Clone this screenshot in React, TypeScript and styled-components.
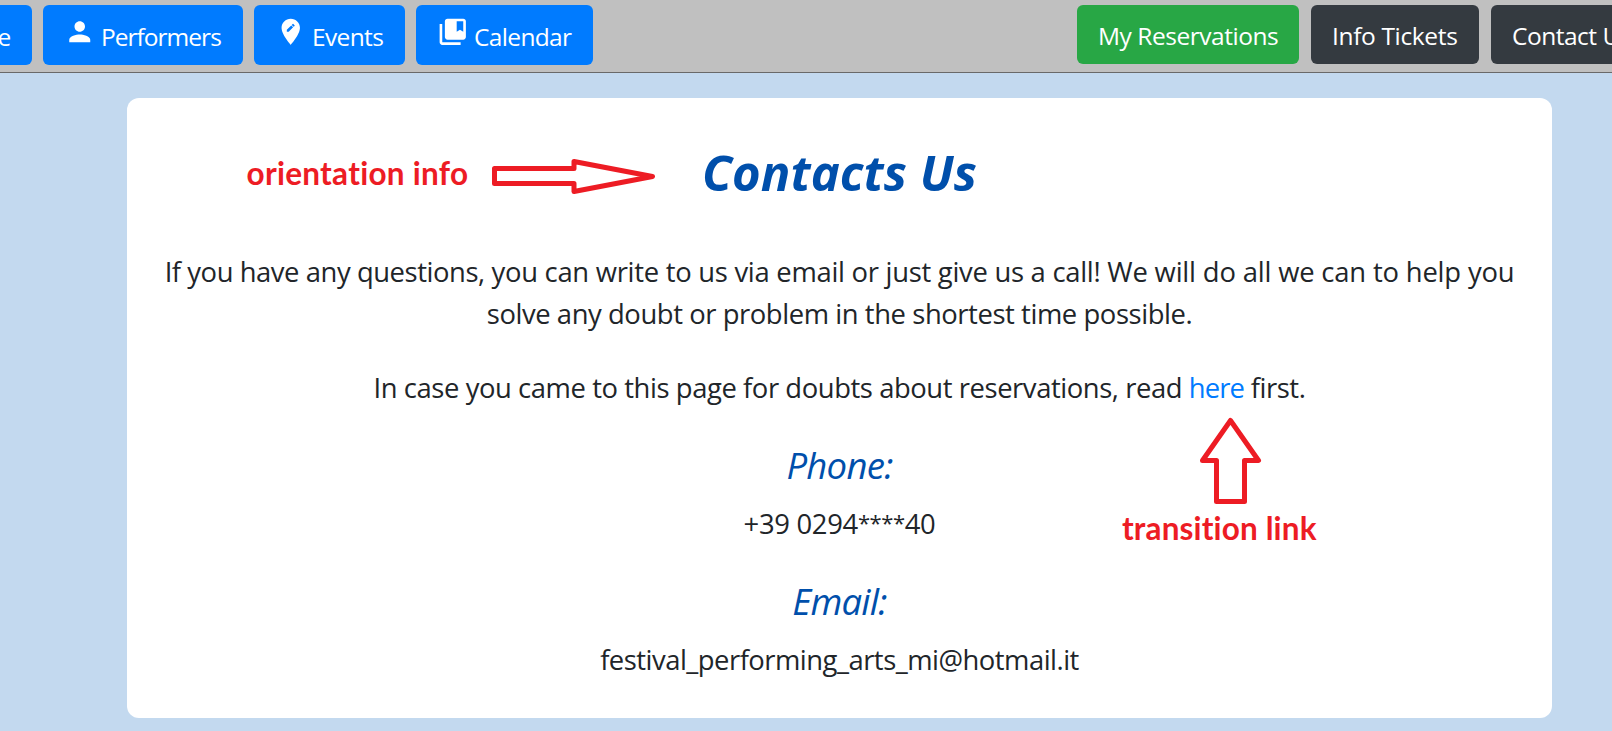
import React from 'react';
import styled, { createGlobalStyle } from 'styled-components';
import { MdHome, MdPerson, MdEditLocation, MdCollectionsBookmark } from 'react-icons/md';

const GlobalStyle = createGlobalStyle`
  *, *::before, *::after { box-sizing: border-box; }
  body {
    margin: 0;
    background: #c3d9ef;
    color: #212529;
    font-family: 'Open Sans', 'Noto Sans', sans-serif;
    overflow: hidden;
  }
`;

const Page = styled.div`
  position: relative;
  height: 731px;
  overflow: hidden;
`;

const Navbar = styled.nav`
  display: flex;
  align-items: flex-start;
  height: 73px;
  padding-top: 5px;
  background: #c0c0c0;
  border-bottom: 1px solid #696969;
`;

const MainLinks = styled.div`
  display: flex;
  flex: none;
  gap: 11px;
  margin-left: -113px;
`;

const SideLinks = styled.div`
  display: flex;
  flex: none;
  gap: 12px;
  margin-left: 484px;
`;

const NavButton = styled.a<{ $width: number; $color: string; $tall?: boolean }>`
  display: flex;
  flex: none;
  align-items: flex-start;
  width: ${(p) => p.$width}px;
  height: ${(p) => (p.$tall ? 60 : 59)}px;
  padding: ${(p) => (p.$tall ? '10.5px 21px' : '11.5px 21px')};
  border-radius: 6px;
  background: ${(p) => p.$color};
  color: #fff;
  white-space: nowrap;

  svg {
    flex: none;
    width: 31.5px;
    height: 31.5px;
  }
`;

const Label = styled.span<{ $spacing: number; $withIcon?: boolean }>`
  margin: ${(p) => (p.$withIcon ? '2px 0 0 5.5px' : '0')};
  font-size: 24.5px;
  line-height: 37.5px;
  letter-spacing: ${(p) => p.$spacing}px;
`;

const Card = styled.main`
  width: 1425px;
  height: 620px;
  margin: 25px 0 0 127px;
  padding: 44px 36px 0;
  border-radius: 12px;
  background: #fff;
  text-align: center;
`;

const Title = styled.h1`
  margin: 0 0 49px;
  color: #004fab;
  font-size: 49px;
  font-style: italic;
  font-weight: 700;
  line-height: 60px;
  letter-spacing: 0.07px;
`;

const Text = styled.p<{ $after: number }>`
  margin: 0 0 ${(p) => p.$after}px;
  font-size: 27.4px;
  line-height: 42px;
`;

const Line = styled.span<{ $spacing: number }>`
  display: block;
  white-space: nowrap;
  letter-spacing: ${(p) => p.$spacing}px;
`;

const Phrase = styled.span<{ $spacing: number }>`
  letter-spacing: ${(p) => p.$spacing}px;
`;

const Masked = styled.span`
  position: relative;
  top: -3px;
  font-size: 22px;
  line-height: 0;
  letter-spacing: -0.4px;
`;

const Link = styled.a`
  color: #007bff;
  letter-spacing: -0.9px;
`;

const Subtitle = styled.h2`
  margin: 0 0 16px;
  color: #004fab;
  font-size: 36.5px;
  font-style: italic;
  font-weight: 400;
  line-height: 44px;
  letter-spacing: -0.75px;
`;

const Note = styled.span<{ $x: number; $y: number; $spacing: number }>`
  position: absolute;
  left: ${(p) => p.$x}px;
  top: ${(p) => p.$y}px;
  color: #ed1c24;
  font-family: Lato, sans-serif;
  font-size: 31.5px;
  font-weight: 700;
  font-variant-ligatures: none;
  line-height: 38px;
  letter-spacing: ${(p) => p.$spacing}px;
  white-space: nowrap;
`;

const Arrows = styled.svg`
  position: absolute;
  inset: 0;
  fill: none;
  stroke: #ed1c24;
  stroke-width: 5;
  stroke-linejoin: round;
  pointer-events: none;
`;

const mainLinks = [
  { label: 'Home', Icon: MdHome, width: 145, spacing: -1 },
  { label: 'Performers', Icon: MdPerson, width: 200, spacing: -0.98 },
  { label: 'Events', Icon: MdEditLocation, width: 151, spacing: -0.64 },
  { label: 'Calendar', Icon: MdCollectionsBookmark, width: 177, spacing: -0.65 },
];

const sideLinks = [
  { label: 'My Reservations', color: '#28a745', width: 222, spacing: -0.47 },
  { label: 'Info Tickets', color: '#343a40', width: 168, spacing: -0.35 },
  { label: 'Contact Us', color: '#343a40', width: 170, spacing: -0.5 },
];

export default function App() {
  return (
    <Page>
      <GlobalStyle />
      <Navbar>
        <MainLinks>
          {mainLinks.map(({ label, Icon, width, spacing }) => (
            <NavButton key={label} $width={width} $color="#007bff" $tall>
              <Icon />
              <Label $spacing={spacing} $withIcon>{label}</Label>
            </NavButton>
          ))}
        </MainLinks>
        <SideLinks>
          {sideLinks.map(({ label, color, width, spacing }) => (
            <NavButton key={label} $width={width} $color={color}>
              <Label $spacing={spacing}>{label}</Label>
            </NavButton>
          ))}
        </SideLinks>
      </Navbar>
      <Card>
        <Title>Contacts Us</Title>
        <Text $after={32}>
          <Line $spacing={-0.27}>
            <Phrase $spacing={-0.43}>If you have any questions,</Phrase>
            {' you can write to us via email or just give us a call! '}
            <Phrase $spacing={-0.17}>We will do all we can to help you</Phrase>
          </Line>
          <Line $spacing={-0.42}>solve any doubt or problem in the shortest time possible.</Line>
        </Text>
        <Text $after={34}>
          <Line $spacing={-0.42}>
            In case you came to this page for doubts about reservations, read <Link>here</Link> first.
          </Line>
        </Text>
        <Subtitle>Phone:</Subtitle>
        <Text $after={34}>
          <Line $spacing={-0.3}>
            +39 0294<Masked>****</Masked>40
          </Line>
        </Text>
        <Subtitle>Email:</Subtitle>
        <Text $after={0}>
          <Line $spacing={-0.5}>festival_performing_arts_mi@hotmail.it</Line>
        </Text>
      </Card>
      <Note $x={246.5} $y={154} $spacing={0.28}>orientation info</Note>
      <Note $x={1122} $y={509} $spacing={0.14}>transition link</Note>
      <Arrows width="1612" height="731" viewBox="0 0 1612 731">
        <path d="M494.5 168.5H574V161.5L652.5 176.5L574 191.5V183.5H494.5Z" />
        <path d="M1230.5 420.5L1258.5 460.5H1244.5V501.5H1216.5V460.5H1202.5Z" />
      </Arrows>
    </Page>
  );
}
